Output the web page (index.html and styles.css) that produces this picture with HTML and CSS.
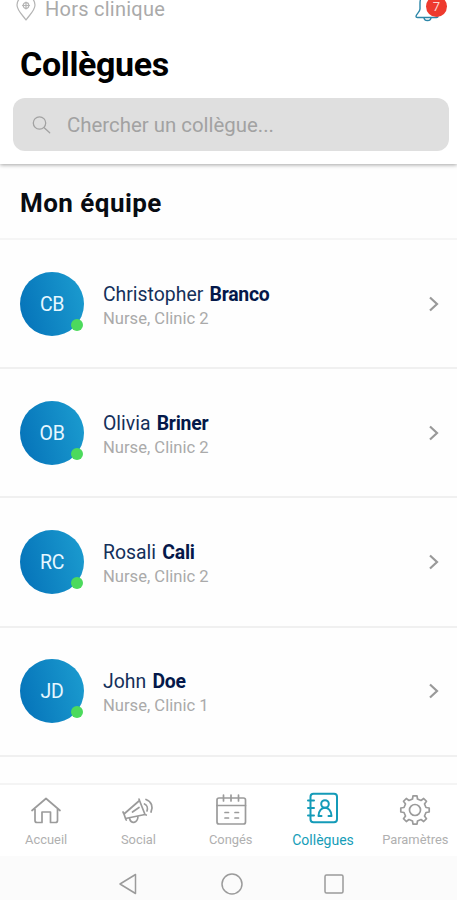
FILE: index.html
```html
<!DOCTYPE html>
<html lang="fr">
<head>
<meta charset="utf-8">
<meta name="viewport" content="width=device-width, initial-scale=1">
<title>Collègues</title>
<link rel="stylesheet" href="styles.css">
</head>
<body>
<div class="app">
  <header class="header">
    <div class="status">
      <svg class="pin" width="22" height="24" viewBox="0 0 22 24"><path d="M11 23C8 18.500 2 13.500 2 8a9 9 0 0 1 18 0c0 5.500-6 10.500-9 15z"/><circle cx="11" cy="8.500" r="2.800"/><path d="M11 5v7M7.500 8.500h7"/></svg>
      <span class="place">Hors clinique</span>
      <div class="bell">
        <svg width="26" height="30" viewBox="0 0 26 30"><path d="M13 3c-5 0-7 4-7 8v6c0 3-4 5-4 7.500 0 .7.500 1 1.500 1h19c1 0 1.500-.3 1.500-1 0-2.500-4-4.500-4-7.500v-6c0-4-2-8-7-8zM10 25.500c0 4 7 4 7 0"/></svg>
        <span class="count">7</span>
      </div>
    </div>
    <h1>Collègues</h1>
    <div class="search">
      <svg width="20" height="20" viewBox="0 0 20 20"><circle cx="7.500" cy="8" r="6.200"/><path d="M12.200 12.700l5.500 5"/></svg>
      <span>Chercher un collègue...</span>
    </div>
  </header>
  <main class="list">
    <h2>Mon équipe</h2>
    <div class="row">
      <div class="avatar">CB<i></i></div>
      <div class="who"><p class="name">Christopher <b>Branco</b></p><p class="role">Nurse, Clinic 2</p></div>
      <svg class="chev" width="12" height="18" viewBox="0 0 12 18"><path d="M2 2.500l7 6.500-7 6.500"/></svg>
    </div>
    <div class="row">
      <div class="avatar">OB<i></i></div>
      <div class="who"><p class="name">Olivia <b>Briner</b></p><p class="role">Nurse, Clinic 2</p></div>
      <svg class="chev" width="12" height="18" viewBox="0 0 12 18"><path d="M2 2.500l7 6.500-7 6.500"/></svg>
    </div>
    <div class="row">
      <div class="avatar">RC<i></i></div>
      <div class="who"><p class="name">Rosali <b>Cali</b></p><p class="role">Nurse, Clinic 2</p></div>
      <svg class="chev" width="12" height="18" viewBox="0 0 12 18"><path d="M2 2.500l7 6.500-7 6.500"/></svg>
    </div>
    <div class="row">
      <div class="avatar">JD<i></i></div>
      <div class="who"><p class="name">John <b>Doe</b></p><p class="role">Nurse, Clinic 1</p></div>
      <svg class="chev" width="12" height="18" viewBox="0 0 12 18"><path d="M2 2.500l7 6.500-7 6.500"/></svg>
    </div>
  </main>
  <nav class="tabs">
    <div class="tab">
      <svg width="36" height="36" viewBox="0 0 36 36"><path d="M4 18.500L18 6.500l14 12M7 17V28.500q0 2 2 2h5V20h8.500V30.500h5q2 0 2-2V17"/></svg>
      <span>Accueil</span>
    </div>
    <div class="tab">
      <svg width="36" height="36" viewBox="0 0 36 36"><path d="M19.500 8.500L25 22.500 5.500 26.500 4 22zM19.500 8.500L19 7M25 22.500l1.300.5M4 22l-1-2M5.500 26.500l.8 1.500M12.500 20l6.500-4.500M9.500 26c1 6.500 8 5.500 8.500-1.500M24.500 12c2.500 1 3.500 4 2.500 7M26 7.500c5.500 2 7.500 7.500 5 12.500"/></svg>
      <span>Social</span>
    </div>
    <div class="tab">
      <svg width="36" height="36" viewBox="0 0 36 36"><rect x="4" y="6" width="28.500" height="26" rx="2"/><path d="M4 13.500h28.500M10.500 3v6M18 3v6M25.500 3v6M12 20.500h3.500M22 20.500h3.500M12 26h3.500M22 26h3.500"/></svg>
      <span>Congés</span>
    </div>
    <div class="tab active">
      <svg width="36" height="36" viewBox="0 0 36 36"><rect x="5.500" y="1.800" width="26.500" height="28.400" rx="3"/><circle cx="20" cy="12" r="3.800"/><path d="M13.500 24c0-11 13-11 13 0M13.500 24h3M23.500 24h3M3 8.500h6M3 16h6M3 23.500h6"/></svg>
      <span>Collègues</span>
    </div>
    <div class="tab">
      <svg width="36" height="36" viewBox="0 0 36 36"><circle cx="18" cy="18" r="5.500"/><path d="M15.500 7L16 3.800h4l.5 3.200 3.500 1.500 2.700-2 2.800 2.800-2 2.700 1.500 3.500 3.200.5v4l-3.200.5-1.500 3.500 2 2.700-2.800 2.800-2.700-2-3.500 1.500-.5 3.200h-4l-.5-3.200-3.500-1.500-2.700 2-2.800-2.800 2-2.700L7 20.500 3.800 20v-4l3.200-.5L8.500 12l-2-2.700 2.800-2.800 2.700 2z"/></svg>
      <span>Paramètres</span>
    </div>
  </nav>
  <div class="system">
    <svg width="24" height="24" viewBox="0 0 24 24"><path d="M3 12L18.500 2.500v19z"/></svg>
    <svg width="24" height="24" viewBox="0 0 24 24"><circle cx="12" cy="12" r="10"/></svg>
    <svg width="24" height="24" viewBox="0 0 24 24"><rect x="3" y="3" width="18" height="18" rx="1.500"/></svg>
  </div>
</div>
</body>
</html>
```

FILE: styles.css
```css
* { box-sizing: border-box; }
body { margin: 0; background: #fefefe; font-family: Roboto, sans-serif; }
h1, h2, p { margin: 0; }
svg { fill: none; stroke: #9b9b9b; stroke-width: 1.7; stroke-linejoin: round; stroke-linecap: round; flex: none; display: block; }
.app { width: 457px; height: 900px; overflow: hidden; display: flex; flex-direction: column; }
.header { height: 164px; flex: none; background: #fff; box-shadow: 0 1px 4px rgba(0,0,0,.36); }
.status { height: 40px; display: flex; align-items: flex-start; padding: 0 9px 0 15px; }
.pin { margin-top: -3px; stroke: #b4b4b4; stroke-width: 1.2; }
.place { margin: -2px 0 0 8px; font-size: 20px; line-height: 22px; letter-spacing: .25px; color: #aaa; }
.bell { position: relative; margin-left: auto; width: 34px; }
.bell svg { margin-top: -8px; stroke: #2c86a8; stroke-width: 1.400; }
.count { position: absolute; left: 12px; top: -4px; width: 21px; height: 21px; border-radius: 50%; background: #ee3a2e; color: #fbd5d0; font-size: 13px; line-height: 21px; text-align: center; }
h1 { padding-left: 20px; font-size: 34px; line-height: 48px; font-weight: 700; letter-spacing: -.35px; color: #000; }
.search { margin: 10px 8px 0 13px; height: 53px; border-radius: 12px; background: #dfdfdf; display: flex; align-items: center; padding: 1px 20px 0 19px; gap: 15px; font-size: 20.400px; color: #a2a2a2; }
.search svg { stroke: #a2a2a2; stroke-width: 1.300; }
.list { height: 619px; flex: none; overflow: hidden; }
h2 { height: 76px; padding: 19px 0 0 20px; font-size: 26px; line-height: 40px; font-weight: 700; letter-spacing: .45px; color: #080c12; border-bottom: 2px solid #f5f5f5; }
.row { height: 129.200px; border-bottom: 2px solid #f0f0f0; display: flex; align-items: center; padding: 0 17px 0 20px; }
.avatar { position: relative; width: 64px; height: 64px; border-radius: 50%; background: linear-gradient(75deg, #0471b8, #1c9dd0); color: #e6f7ff; font-size: 19.500px; letter-spacing: -.4px; line-height: 66px; text-align: center; }
.avatar i { position: absolute; left: 51px; top: 47px; width: 12px; height: 12px; border-radius: 50%; background: #4cda5c; }
.who { margin-left: 19px; flex: 1; padding-top: 4px; }
.name { font-size: 19.400px; line-height: 26px; color: #14305a; word-spacing: 1.500px; }
.name b { font-weight: 700; color: #04184a; letter-spacing: -.25px; }
.role { font-size: 16.600px; line-height: 22px; color: #aaa; }
.chev { stroke-width: 2.200; stroke: #999; stroke-linecap: butt; stroke-linejoin: miter; }
.tabs { height: 73px; flex: none; background: #fff; border-top: 2px solid #f4f4f4; display: grid; grid-template-columns: repeat(5, 92.300px); padding-top: 7px; }
.tab { display: flex; flex-direction: column; align-items: center; gap: 2px; font-size: 12.900px; line-height: 20px; color: #b0b0b0; }
.active { color: #159db8; font-size: 14px; }
.active svg { stroke: #149bb8; stroke-width: 2; }
.system { height: 44px; flex: none; background: #fbfbfb; display: flex; justify-content: space-between; padding: 16px 111px 0 117px; }
.system svg { stroke-width: 1.500; }
```
